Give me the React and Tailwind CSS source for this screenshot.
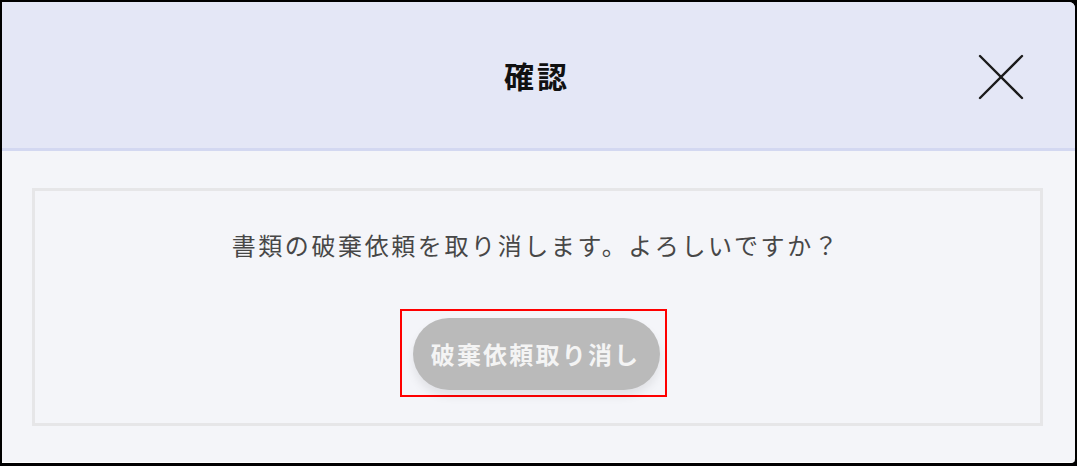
export default function App() {
  const font = { fontFamily: '"Noto Sans CJK JP", "Noto Sans", sans-serif' };
  return (
    <div className="w-[1077px] h-[466px] bg-black pt-[2px] px-[2px] pb-[3px]" style={font}>
      <div className="w-full h-full flex flex-col rounded-tr-[6px] rounded-br-[4px] overflow-hidden bg-[#f4f5f9] border-b border-white">
        <div className="relative h-[149px] shrink-0 bg-[#e4e7f6] border-b-[3px] border-[#d3d8f1] flex items-center justify-center">
          <h1 className="text-[30px] font-bold text-[#111] tracking-[3px] pl-[3px] -ml-[6px] leading-none">確認</h1>
          <button className="absolute left-[974px] top-[50px] w-[50px] h-[50px] flex items-center justify-center">
            <svg width="46" height="46" viewBox="0 0 46 46">
              <line x1="2" y1="2" x2="44" y2="44" stroke="#1b1b1b" strokeWidth="2.4" strokeLinecap="round" />
              <line x1="44" y1="2" x2="2" y2="44" stroke="#1b1b1b" strokeWidth="2.4" strokeLinecap="round" />
            </svg>
          </button>
        </div>
        <div className="flex-1 pt-[37px] pl-[30px] pr-[32px] pb-[36px]">
          <div className="h-full border-[3px] border-[#e6e6e8] flex flex-col items-center pt-[36px]">
            <p className="text-[24px] leading-[36px] text-[#474747] tracking-[2.6px] pl-[1px] mr-[4px]">
              書類の破棄依頼を取り消します。よろしいですか？
            </p>
            <div className="mt-[46px] mr-[8px] border-2 border-[#ff0000] pt-[7px] pb-[5px] pl-[11px] pr-[5px]">
              <button className="w-[247px] h-[72px] rounded-full bg-[#bababa] text-[#f4f4f4] font-bold text-[24px] tracking-[2.2px] pl-[2px] pr-[4px] shadow-[0_6px_10px_rgba(0,0,0,0.08)]">
                破棄依頼取り消し
              </button>
            </div>
          </div>
        </div>
      </div>
    </div>
  );
}
